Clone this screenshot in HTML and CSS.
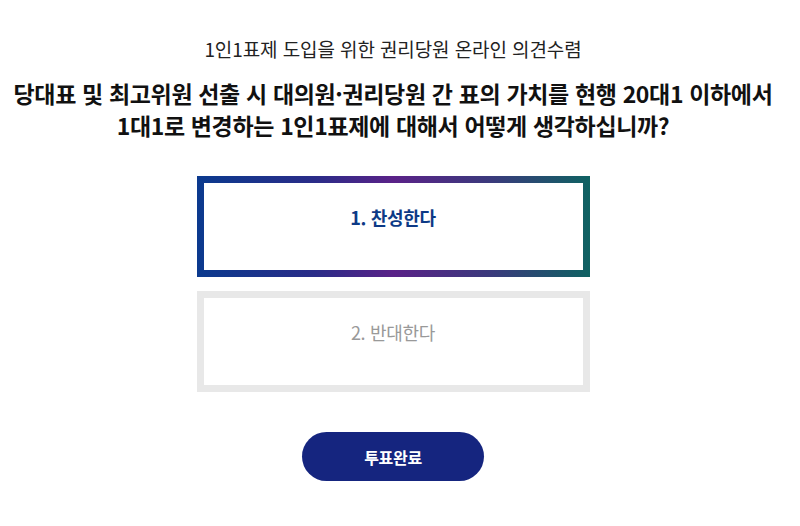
FILE: index.html
```html
<!DOCTYPE html>
<html lang="ko">
<head>
<meta charset="utf-8">
<link rel="stylesheet" href="styles.css">
</head>
<body>
<main class="page">
  <p class="survey-title">1인1표제 도입을 위한 권리당원 온라인 의견수렴</p>
  <h1 class="question">당대표 및 최고위원 선출 시 대의원·권리당원 간 표의 가치를 현행 20대1 이하에서<br>1대1로 변경하는 1인1표제에 대해서 어떻게 생각하십니까?</h1>
  <div class="options">
    <div class="option selected"><span class="option-inner">1. 찬성한다</span></div>
    <div class="option"><span class="option-inner">2. 반대한다</span></div>
  </div>
  <div class="actions">
    <button class="submit">투표완료</button>
  </div>
</main>
</body>
</html>
```

FILE: styles.css
```css
html, body {
  margin: 0;
  padding: 0;
  background: #fff;
}
body {
  font-family: "Noto Sans CJK KR", "Noto Sans", sans-serif;
  color: #111;
}
.page {
  width: 786px;
  padding-top: 35px;
  display: flex;
  flex-direction: column;
  align-items: center;
}
.survey-title {
  margin: 0;
  font-size: 19px;
  line-height: 28px;
  font-weight: 400;
  letter-spacing: -0.1px;
  color: #222;
}
.question {
  margin: 14px 0 0;
  font-size: 23px;
  line-height: 32px;
  font-weight: 700;
  letter-spacing: -0.35px;
  text-align: center;
  color: #111;
  white-space: nowrap;
}
.options {
  margin-top: 35px;
  display: flex;
  flex-direction: column;
  gap: 14px;
}
.option {
  width: 393px;
  height: 101px;
  box-sizing: border-box;
  padding: 7px;
  background: #e8e8e8;
}
.option-inner {
  display: flex;
  align-items: center;
  justify-content: center;
  height: 100%;
  box-sizing: border-box;
  padding-bottom: 20px;
  background: #fff;
  font-size: 18px;
  color: #999;
  letter-spacing: -0.3px;
}
.option.selected {
  background: linear-gradient(90deg, #0b3a8e 0%, #2a2c88 30%, #5a2288 50%, #3a3a7c 75%, #0f6262 100%);
}
.option.selected .option-inner {
  color: #0d3a86;
  font-weight: 700;
}
.actions {
  margin-top: 40px;
}
.submit {
  width: 182px;
  height: 49px;
  border: none;
  border-radius: 25px;
  background: #15257f;
  color: #fff;
  font-family: inherit;
  font-size: 16px;
  font-weight: 700;
  letter-spacing: -0.3px;
  cursor: pointer;
}
```
